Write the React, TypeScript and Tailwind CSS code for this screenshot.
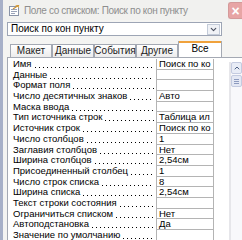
import { ChevronDown } from 'lucide-react';

const rows: [string, string][] = [
  ['Имя', 'Поиск по ко'],
  ['Данные', ''],
  ['Формат поля', ''],
  ['Число десятичных знаков', 'Авто'],
  ['Маска ввода', ''],
  ['Тип источника строк', 'Таблица ил'],
  ['Источник строк', 'Поиск по ко'],
  ['Число столбцов', '1'],
  ['Заглавия столбцов', 'Нет'],
  ['Ширина столбцов', '2,54см'],
  ['Присоединенный столбец', '1'],
  ['Число строк списка', '8'],
  ['Ширина списка', '2,54см'],
  ['Текст строки состояния', ''],
  ['Ограничиться списком', 'Нет'],
  ['Автоподстановка', 'Да'],
  ['Значение по умолчанию', ''],
];

const tabs = ['Макет', 'Данные', 'События', 'Другие'];

function TitleIcon() {
  return (
    <svg width="11" height="11" viewBox="0 0 11 11">
      <rect x="0.5" y="1.5" width="9" height="9" fill="#fff" stroke="#8a94a8" />
      <rect x="2" y="4" width="6" height="1" fill="#9aa3b8" />
      <rect x="2" y="6" width="6" height="1" fill="#9aa3b8" />
      <rect x="2" y="8" width="4" height="1" fill="#9aa3b8" />
      <path d="M6 0 L10 0 L10 3 Z" fill="#e7b04a" />
      <path d="M4 4 L10 0" stroke="#c9923a" strokeWidth="1.2" />
    </svg>
  );
}

export default function App() {
  return (
    <div
      className="flex h-[240px] w-[242px] overflow-hidden bg-[#f4f4f2] text-black"
      style={{ fontFamily: '"Liberation Sans", Arial, sans-serif' }}
    >
      <div className="w-[3px] shrink-0 bg-[#a7b0c8]" />
      <div className="flex min-w-0 flex-1 flex-col">
        {/* title bar */}
        <div className="flex h-[20px] shrink-0 items-center bg-[#f1f1ef]">
          <div className="ml-[6px] flex h-[11px] w-[11px] items-center">
            <TitleIcon />
          </div>
          <span className="ml-[4px] whitespace-nowrap text-[10px] tracking-[-0.35px] text-[#8e8e8e]">
            Поле со списком: Поиск по кон пункту
          </span>
          <div className="ml-auto mt-[1px] flex h-[17px] w-[14px] shrink-0 items-center justify-center rounded-l-[3px] border border-r-0 border-[#d49a9a] bg-[#e7a5a5] text-[14px] font-bold leading-none text-white">
            ×
          </div>
        </div>

        {/* combo box */}
        <div className="ml-[4px] mt-[2px] flex h-[14px] w-[215px] items-center border border-[#9da5b5] bg-white">
          <span className="ml-[3px] flex-1 whitespace-nowrap text-[10px] leading-none">Поиск по кон пункту</span>
          <div className="mr-[1px] flex h-[11px] w-[13px] items-center justify-center border border-[#c3cbd8] bg-[#f0f2f6]">
            <ChevronDown size={9} strokeWidth={3} color="#4a5060" />
          </div>
        </div>

        {/* tabs */}
        <div className="ml-[7px] mt-[5px] flex h-[16px] items-end text-[10px] leading-none">
          {tabs.map((t) => (
            <div
              key={t}
              className="flex h-[13px] w-[42px] items-center justify-center border border-b-0 border-[#a4a9b3] bg-gradient-to-b from-white to-[#ececec] text-[#222]"
            >
              {t}
            </div>
          ))}
          <div className="flex h-[16px] w-[44px] flex-col border-x border-[#a4a9b3] bg-white">
            <div className="h-[2px] bg-[#f0a23c]" />
            <div className="flex flex-1 items-center justify-center pb-[2px]">Все</div>
          </div>
        </div>

        {/* property panel */}
        <div className="ml-[4px] flex min-h-0 flex-1 border-l border-t border-[#a4a9b3] bg-white">
          <div className="flex w-[206px] shrink-0 flex-col pl-[5px] pt-[1px]">
            {rows.map(([label, value]) => (
              <div key={label} className="flex h-[10.7px] shrink-0 text-[9.5px] leading-[10px]">
                <div className="flex min-w-0 flex-1 whitespace-nowrap">
                  <span className="shrink-0">{label}</span>
                  <span className="ml-[2px] mr-[2px] min-w-0 flex-1 bg-[linear-gradient(to_right,#000_1px,transparent_1px)] bg-[length:4px_1px] bg-[position:1px_8px] bg-repeat-x" />
                </div>
                <div className="w-[58px] shrink-0 overflow-hidden whitespace-nowrap border-x border-b border-[#b4b4b4] pl-[2px]">
                  {value}
                </div>
              </div>
            ))}
          </div>
          <div className="flex-1" />
          <div className="mt-[4px] flex w-[13px] shrink-0 flex-col border-l-2 border-[#e6e6ea] bg-[#f8f8fb]">
            <div className="flex h-[12px] items-center justify-center rounded-[2px] border border-[#c4cbe0] bg-[#e8ecf6]">
              <ChevronDown size={8} strokeWidth={3} color="#4d6185" className="rotate-180" />
            </div>
            <div className="mt-[1px] flex h-[12px] items-center justify-center rounded-[2px] border border-[#c4cbe0] bg-[#e4e8f4]">
              <div className="flex flex-col gap-[1px]">
                <div className="h-px w-[5px] bg-[#8d9bbf]" />
                <div className="h-px w-[5px] bg-[#8d9bbf]" />
                <div className="h-px w-[5px] bg-[#8d9bbf]" />
              </div>
            </div>
          </div>
        </div>
      </div>
    </div>
  );
}
